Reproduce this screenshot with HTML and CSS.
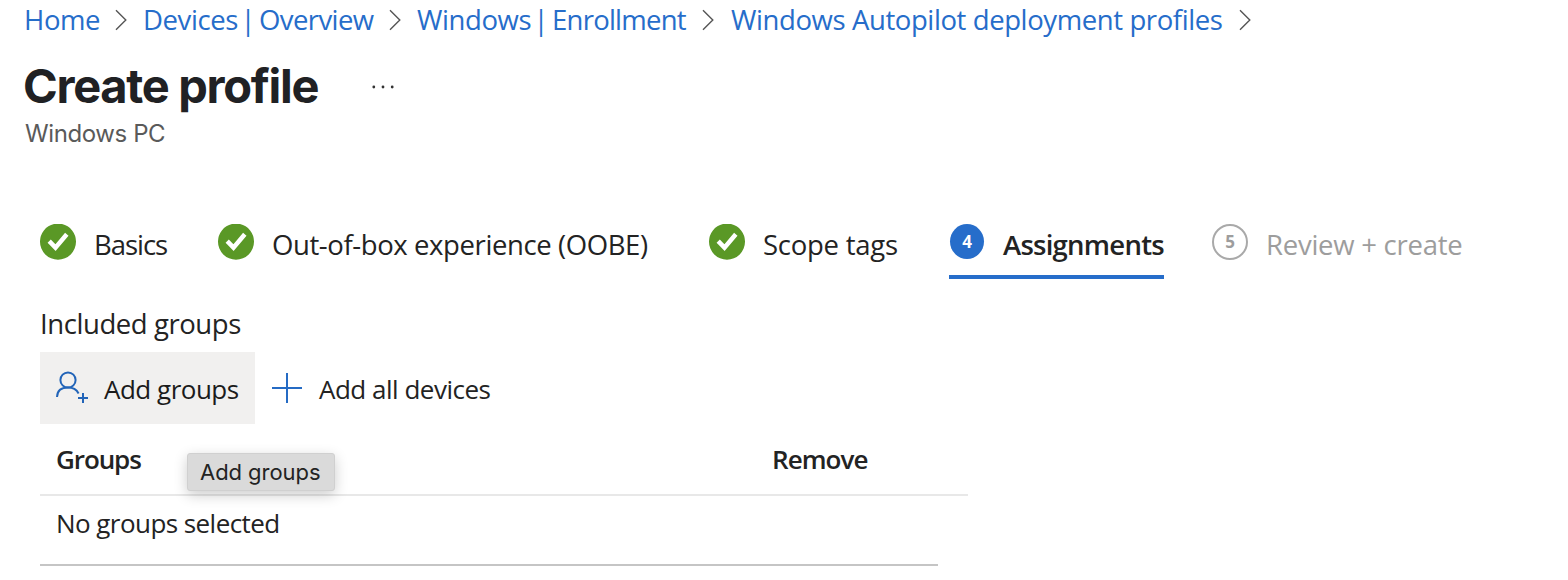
FILE: index.html
```html
<!DOCTYPE html>
<html lang="en">
<head>
<meta charset="utf-8">
<title>Create profile</title>
<link rel="stylesheet" href="styles.css">
</head>
<body>
<svg class="defs" aria-hidden="true">
  <symbol id="chevron" viewBox="0 0 12 22"><path d="M1 1.2 L10.8 11 L1 20.8" fill="none" stroke="#555" stroke-width="1.4"/></symbol>
  <symbol id="check" viewBox="0 0 36 36"><path d="M14 0H22A18 18 0 0 1 36 17.7A18 18 0 0 1 0 17.7A18 18 0 0 1 14 0Z" fill="#5a9826"/><path d="M9.2 17.2 L15.5 23.6 L26.8 10.2" fill="none" stroke="#fff" stroke-width="4.5"/></symbol>
</svg>

<nav class="breadcrumb">
  <a class="crumb home">Home</a>
  <svg class="chevron"><use href="#chevron"/></svg>
  <a class="crumb devices"><span>Devices</span><span class="pipe">|</span><span class="overview">Overview</span></a>
  <svg class="chevron"><use href="#chevron"/></svg>
  <a class="crumb enrollment"><span>Windows</span><span class="pipe">|</span><span class="enroll">Enrollment</span></a>
  <svg class="chevron"><use href="#chevron"/></svg>
  <a class="crumb profiles">Windows Autopilot deployment profiles</a>
  <svg class="chevron"><use href="#chevron"/></svg>
</nav>

<header class="heading">
  <div class="title-row">
    <h1>Create profile</h1>
    <svg class="more" viewBox="0 0 24 6" fill="#333"><circle cx="2.8" cy="3" r="1.4"/><circle cx="12" cy="3" r="1.4"/><circle cx="21.2" cy="3" r="1.4"/></svg>
  </div>
  <p class="subtitle">Windows PC</p>
</header>

<ol class="steps">
  <li class="step"><svg class="badge"><use href="#check"/></svg><span class="label basics">Basics</span></li>
  <li class="step"><svg class="badge"><use href="#check"/></svg><span class="label oobe">Out-of-box experience (OOBE)</span></li>
  <li class="step"><svg class="badge"><use href="#check"/></svg><span class="label scope">Scope tags</span></li>
  <li class="step active"><span class="badge number">4</span><span class="label assignments">Assignments</span></li>
  <li class="step pending"><span class="badge number">5</span><span class="label review">Review + create</span></li>
</ol>

<main class="content">
  <h2>Included groups</h2>
  <div class="toolbar">
    <button class="command hovered">
      <svg class="person" viewBox="0 0 34 34" fill="none" stroke="#2264b8" stroke-width="2"><circle cx="12" cy="9" r="7.6"/><path d="M1 26C1.3 19.5 6 16.6 12 16.6C17 16.6 20.7 18.9 22.6 22.4M27 22V32M22 27H32"/></svg>
      <span class="command-text">Add groups</span>
    </button>
    <button class="command">
      <svg class="plus" viewBox="0 0 30 30" stroke="#256bc4" stroke-width="2"><path d="M0 15H30M15 0V30"/></svg>
      <span class="command-text all">Add all devices</span>
    </button>
  </div>
  <div class="table">
    <div class="table-head"><span class="col groups">Groups</span><span class="col remove">Remove</span></div>
    <div class="table-row">No groups selected</div>
    <div class="tooltip">Add groups</div>
  </div>
</main>
</body>
</html>
```
FILE: styles.css
```css
* { box-sizing: border-box; }
body {
  margin: 0;
  background: #fff;
  color: #232323;
  font: 27.5px/38px "Open Sans", "Noto Sans", sans-serif;
  overflow: hidden;
}
h1, h2, p, ol { margin: 0; padding: 0; font-weight: 400; }
.defs { display: none; }

.breadcrumb { display: flex; height: 40px; padding-left: 24px; align-items: center; white-space: nowrap; }
.crumb { display: flex; flex: none; color: #266dca; letter-spacing: -.4px; }
.crumb.home { width: 91px; }
.crumb.devices { display: grid; grid-template-columns: 94px 22px auto; margin-left: 16px; width: 231px; }
.crumb.enrollment { display: grid; grid-template-columns: 113px 22px auto; margin-left: 16px; width: 285px; }
.crumb.profiles { margin-left: 17px; width: 508px; }
.pipe { text-align: center; letter-spacing: 0; }
.overview { letter-spacing: -.6px; }
.enroll { letter-spacing: -.75px; }
.chevron { width: 12px; height: 22px; flex: none; }
.crumb.devices + .chevron { margin-left: 15px; }

.heading { padding: 18px 0 0 23px; }
.title-row { display: flex; align-items: center; height: 56px; }
h1 { width: 348px; font: 700 47px/56px Inter, sans-serif; letter-spacing: -1.3px; color: #202124; }
.more { width: 24px; height: 6px; margin-top: 2px; }
.subtitle { height: 30px; margin: 5px 0 0 2px; font: 24px/30px Inter, sans-serif; letter-spacing: -.4px; color: #5a5a5a; }

.steps {
  display: grid;
  grid-template-columns: 178px 491px 240px 263px auto;
  height: 63px;
  margin: 67px 0 0 40px;
  list-style: none;
}
.step { display: flex; gap: 18px; padding-top: 8px; white-space: nowrap; }
.badge { width: 36px; height: 36px; flex: none; }
.label { padding-top: 2px; }
.number { display: flex; align-items: center; justify-content: center; border-radius: 50%; font-size: 17px; font-weight: 700; }
.active { width: 215px; border-bottom: 4px solid #266dca; gap: 19px; }
.active .number { width: 34px; height: 35px; margin-left: 1px; background: #266dca; color: #fff; }
.active .label { font-weight: 600; }
.pending { color: #9d9d9d; }
.pending .number { border: 2px solid #a9a9a9; }
.basics { letter-spacing: -1.05px; }
.oobe { letter-spacing: -.4px; }
.scope { letter-spacing: -.25px; }
.assignments { letter-spacing: -.75px; }
.review { letter-spacing: -.25px; }

.content { padding: 26px 0 0 40px; }
h2 { font-size: 27.5px; line-height: 38px; letter-spacing: -.43px; }
.toolbar { display: flex; margin-top: 9px; gap: 17px; }
.command { display: flex; align-items: center; height: 72px; padding: 0; border: 0; background: none; color: inherit; font: 26px/38px "Open Sans", "Noto Sans", sans-serif; white-space: nowrap; }
.command.hovered { width: 215px; padding-left: 16px; background: #f1f0ef; color: #1b1b1b; }
.command-text { margin: 2px 0 0 14px; letter-spacing: -.5px; }
.command-text.all { margin-left: 17px; letter-spacing: -.49px; }
.person { width: 34px; height: 34px; }
.plus { width: 30px; height: 30px; }

.table { position: relative; width: 928px; font-size: 26px; }
.table-head { display: grid; grid-template-columns: 716px auto; height: 72px; padding: 16px 0 0 16px; border-bottom: 2px solid #e8e8e8; font-weight: 600; }
.groups { letter-spacing: -1.1px; }
.remove { letter-spacing: -.95px; }
.table-row { width: 898px; height: 70px; padding: 8px 0 0 16px; border-bottom: 2px solid #c5c5c5; letter-spacing: -.56px; }
.tooltip {
  position: absolute;
  left: 147px;
  top: 29px;
  width: 148px;
  height: 38px;
  padding-left: 12px;
  border: 1px solid #d0d0d0;
  border-radius: 3px;
  background: #dadada;
  box-shadow: 0 4px 14px rgba(0, 0, 0, .2);
  font: 22px/36px Inter, sans-serif;
  letter-spacing: -.05px;
}
```
